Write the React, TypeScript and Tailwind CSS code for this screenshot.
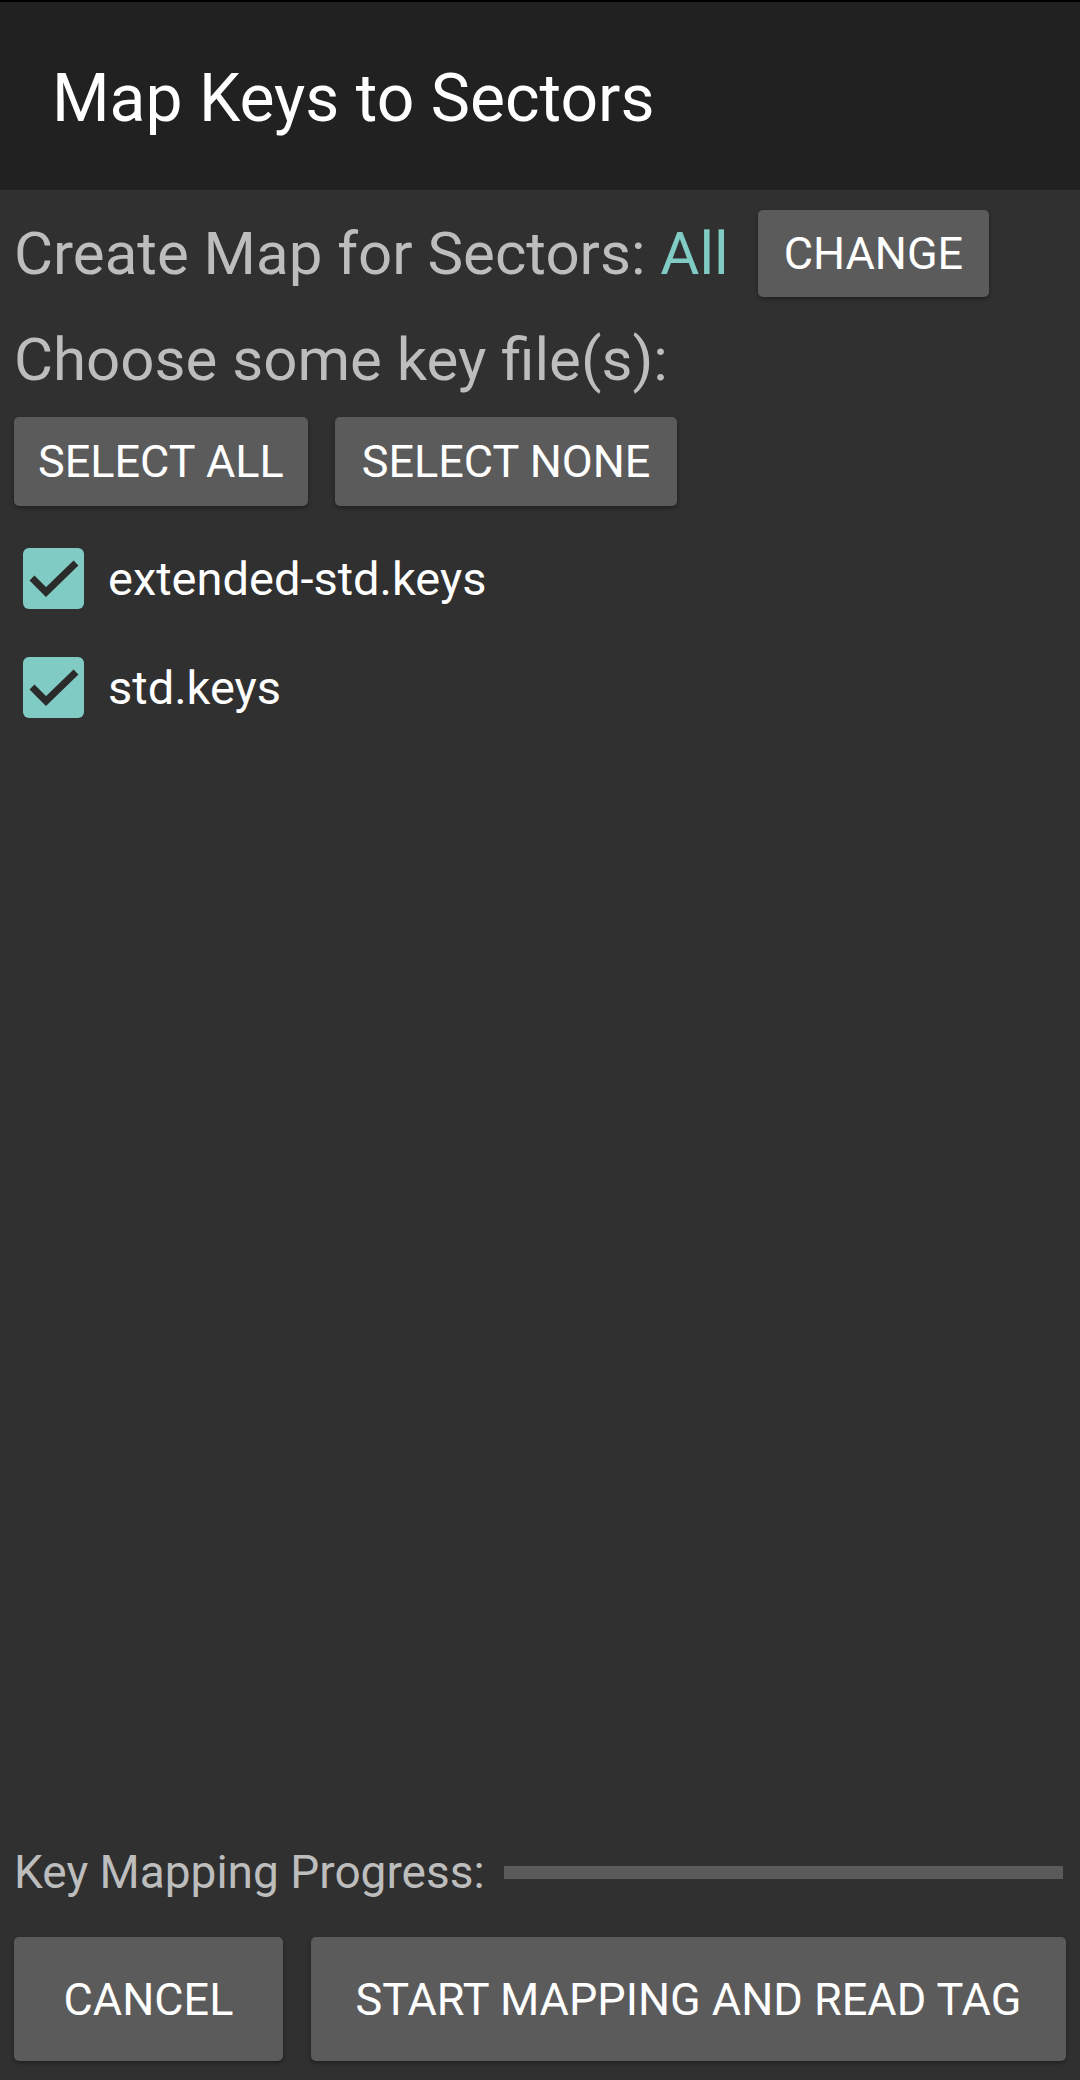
const font = { fontFamily: "Roboto, 'Noto Sans', sans-serif" };

const Btn: React.FC<{ label: string; className?: string }> = ({ label, className = "" }) => (
  <button
    className={`flex items-center justify-center rounded-[5px] bg-[#5b5b5c] text-[45px] leading-none text-white shadow-[0_2px_4px_rgba(0,0,0,0.35)] ${className}`}
  >
    {label}
  </button>
);

const CheckRow: React.FC<{ label: string }> = ({ label }) => (
  <div className="flex items-center">
    <div className="ml-[9px] h-[61px] w-[61px] rounded-[6px] bg-[#80cbc4]">
      <svg viewBox="0 0 61 61" className="h-full w-full">
        <path d="M9 30 L23 44 L53 15" fill="none" stroke="#2b2b2b" strokeWidth="7" />
      </svg>
    </div>
    <span className="ml-[24px] text-[47px] leading-none text-white">{label}</span>
  </div>
);

export default function App() {
  return (
    <div className="flex h-[2080px] w-[1080px] flex-col bg-[#303030]" style={font}>
      {/* Toolbar */}
      <div className="h-[190px] border-t-2 border-black bg-[#212121] pl-[52px] pt-[64px]">
        <h1 className="text-[66px] leading-none text-white">Map Keys to Sectors</h1>
      </div>

      {/* Content */}
      <div className="flex flex-col px-[14px] pt-[20px]">
        <div className="flex h-[87px] items-center">
          <span className="text-[60px] leading-none text-[#bdbdbd]">
            Create Map for Sectors: <span className="text-[#80cbc4]">All</span>
          </span>
          <Btn label="CHANGE" className="ml-[29px] h-[87px] px-[26px]" />
        </div>

        <p className="mt-[33px] text-[60px] leading-none text-[#bdbdbd]">Choose some key file(s):</p>

        <div className="mt-[27px] flex gap-[27px]">
          <Btn label="SELECT ALL" className="h-[89px] px-[24px]" />
          <Btn label="SELECT NONE" className="h-[89px] px-[27px]" />
        </div>

        <div className="mt-[42px] flex flex-col gap-[48px]">
          <CheckRow label="extended-std.keys" />
          <CheckRow label="std.keys" />
        </div>
      </div>

      <div className="flex-1" />

      {/* Bottom */}
      <div className="flex flex-col pb-[19px] pl-[14px] pr-[14px]">
        <div className="flex items-center pr-[3px]">
          <span className="text-[46px] leading-none text-[#bdbdbd]">Key Mapping Progress:</span>
          <div className="ml-[19px] h-[13px] flex-1 bg-[#5a5a5a]" />
        </div>
        <div className="mt-[42px] flex gap-[28px]">
          <Btn label="CANCEL" className="h-[124px] w-[269px]" />
          <Btn label="START MAPPING AND READ TAG" className="h-[124px] flex-1" />
        </div>
      </div>
    </div>
  );
}
